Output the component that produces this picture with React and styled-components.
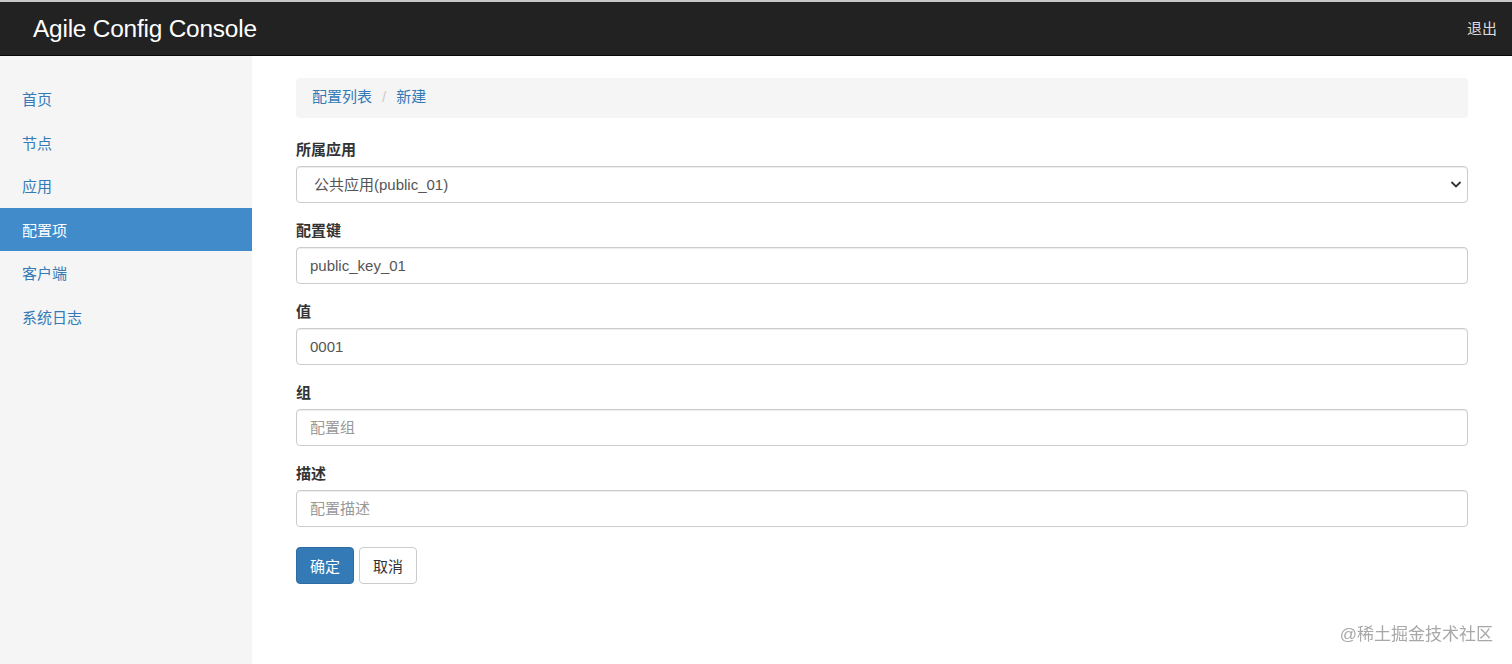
import React from 'react'
import styled, { createGlobalStyle } from 'styled-components'

const GlobalStyle = createGlobalStyle`
    html, body {
        margin: 0;
        padding: 0;
        background: #fff;
        font-family: "Liberation Sans", Arial, "Noto Sans CJK SC", sans-serif;
        font-size: 15px;
        color: #333;
    }
    * {
        box-sizing: border-box;
    }
`

const Page = styled.div`
    display: flex;
    flex-direction: column;
    height: 664px;
    overflow: hidden;
`

const Navbar = styled.header`
    height: 56px;
    flex-shrink: 0;
    background: #222;
    border-top: 2px solid #c8c8c8;
    border-bottom: 1px solid #080808;
    display: flex;
    align-items: center;
    justify-content: space-between;
    padding: 0 15px 0 33px;
`

const Brand = styled.div`
    color: #fff;
    font-size: 24.4px;
    letter-spacing: -0.2px;
`

const Logout = styled.a`
    color: #ddd;
    font-size: 15px;
    padding-bottom: 2px;
`

const Body = styled.div`
    display: flex;
    flex: 1;
`

const Sidebar = styled.nav`
    width: 252px;
    flex-shrink: 0;
    background: #f5f5f5;
    padding-top: 21px;
    display: flex;
    flex-direction: column;
`

const NavItem = styled.a`
    height: 43.5px;
    display: flex;
    align-items: center;
    padding-left: 22px;
    font-size: 15px;
    color: ${(p) => (p.$active ? '#fff' : '#337ab7')};
    background: ${(p) => (p.$active ? '#428bca' : 'transparent')};
`

const Main = styled.main`
    flex: 1;
    padding: 22px 44px 0 44px;
`

const Breadcrumb = styled.ol`
    list-style: none;
    margin: 0 0 21px 0;
    height: 40px;
    padding: 0 16px 5px 16px;
    background: #f5f5f5;
    border-radius: 4px;
    display: flex;
    align-items: center;
    font-size: 15px;
`

const Crumb = styled.li`
    color: #337ab7;
    & + &::before {
        content: '/';
        color: #ccc;
        padding: 0 10px 0 10px;
    }
`

const FormGroup = styled.div`
    margin-bottom: 17px;
`

const Label = styled.label`
    display: block;
    font-weight: bold;
    font-size: 15px;
    line-height: 22px;
    margin-bottom: 5px;
    color: #333;
`

const Input = styled.input`
    display: block;
    width: 100%;
    height: 37px;
    padding: 6px 13px;
    font-size: 15px;
    font-family: inherit;
    color: #555;
    background: #fff;
    border: 1px solid #ccc;
    border-radius: 4px;
    box-shadow: inset 0 1px 1px rgba(0, 0, 0, 0.075);
    outline: none;
    &::placeholder {
        color: #999;
    }
`

const SelectWrap = styled.div`
    position: relative;
`

const Select = styled.select`
    display: block;
    width: 100%;
    height: 37px;
    padding: 6px 13px 6px 17px;
    font-size: 15px;
    font-family: inherit;
    color: #555;
    background: #fff;
    border: 1px solid #ccc;
    border-radius: 4px;
    box-shadow: inset 0 1px 1px rgba(0, 0, 0, 0.075);
    appearance: none;
    outline: none;
`

const Chevron = styled.svg`
    position: absolute;
    right: 6px;
    top: 14px;
    pointer-events: none;
`

const Actions = styled.div`
    display: flex;
    gap: 5px;
    margin-top: 20px;
`

const Button = styled.button`
    height: 37px;
    padding: 0 13px;
    font-size: 15px;
    font-family: inherit;
    border-radius: 4px;
    border: 1px solid ${(p) => (p.$primary ? '#2e6da4' : '#ccc')};
    background: ${(p) => (p.$primary ? '#337ab7' : '#fff')};
    color: ${(p) => (p.$primary ? '#fff' : '#333')};
`

const Watermark = styled.div`
    position: fixed;
    right: 19px;
    bottom: 19px;
    font-size: 17px;
    color: #a8a8a8;
`

const menu = ['首页', '节点', '应用', '配置项', '客户端', '系统日志']

function App() {
    return (
        <Page>
            <GlobalStyle />
            <Navbar>
                <Brand>Agile Config Console</Brand>
                <Logout>退出</Logout>
            </Navbar>
            <Body>
                <Sidebar>
                    {menu.map((m) => (
                        <NavItem key={m} $active={m === '配置项'}>
                            {m}
                        </NavItem>
                    ))}
                </Sidebar>
                <Main>
                    <Breadcrumb>
                        <Crumb>配置列表</Crumb>
                        <Crumb>新建</Crumb>
                    </Breadcrumb>
                    <FormGroup>
                        <Label>所属应用</Label>
                        <SelectWrap>
                            <Select defaultValue="public_01">
                                <option value="public_01">公共应用(public_01)</option>
                            </Select>
                            <Chevron width="12" height="9" viewBox="0 0 12 9">
                                <path d="M1.5 2 L6 6.5 L10.5 2" fill="none" stroke="#333" strokeWidth="1.8" />
                            </Chevron>
                        </SelectWrap>
                    </FormGroup>
                    <FormGroup>
                        <Label>配置键</Label>
                        <Input defaultValue="public_key_01" />
                    </FormGroup>
                    <FormGroup>
                        <Label>值</Label>
                        <Input defaultValue="0001" />
                    </FormGroup>
                    <FormGroup>
                        <Label>组</Label>
                        <Input placeholder="配置组" />
                    </FormGroup>
                    <FormGroup>
                        <Label>描述</Label>
                        <Input placeholder="配置描述" />
                    </FormGroup>
                    <Actions>
                        <Button $primary>确定</Button>
                        <Button>取消</Button>
                    </Actions>
                </Main>
            </Body>
            <Watermark>@稀土掘金技术社区</Watermark>
        </Page>
    )
}

export default App
